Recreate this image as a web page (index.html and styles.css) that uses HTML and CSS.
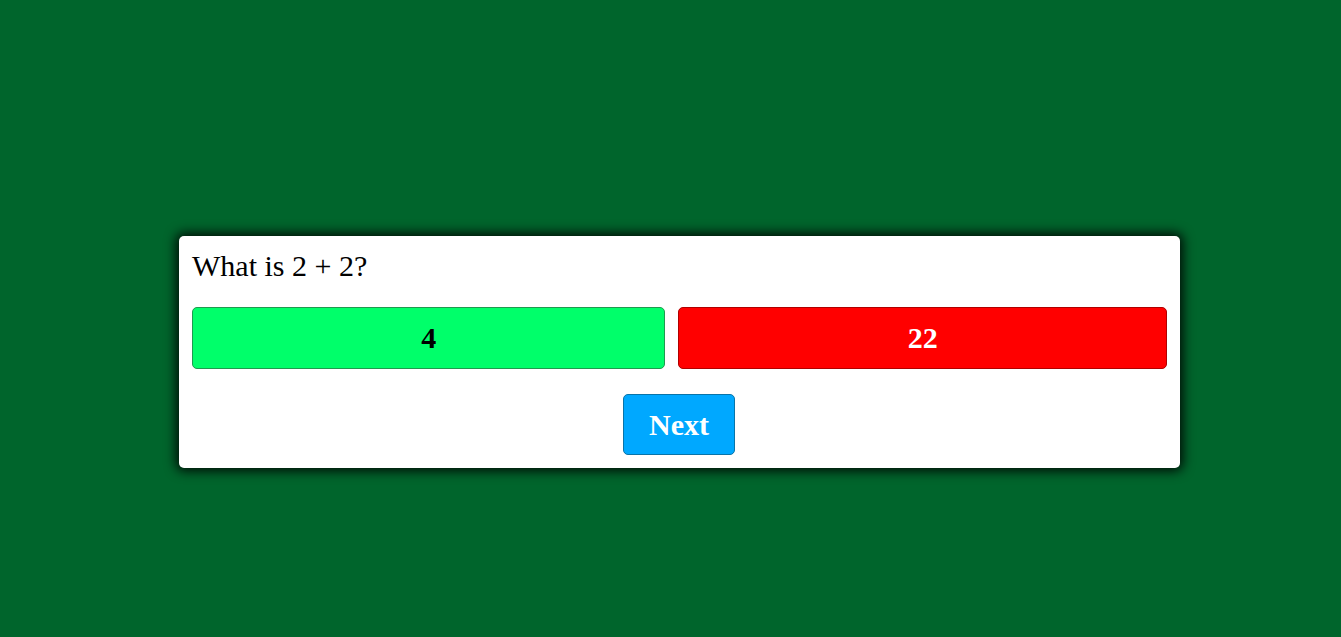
FILE: index.html
```html
<!DOCTYPE html>
<html>
<head>
<meta charset="utf-8">
<link rel="stylesheet" href="styles.css">
</head>
<body>
<main class="page">
  <section class="card">
    <div class="question">What is 2 + 2?</div>
    <div class="answers">
      <button class="answer correct">4</button>
      <button class="answer wrong">22</button>
    </div>
    <div class="controls">
      <button class="next">Next</button>
    </div>
  </section>
</main>
</body>
</html>
```
FILE: styles.css
```css
html, body {
  margin: 0;
  padding: 0;
}
body {
  background: #00652c;
  font-family: "Liberation Serif", "Times New Roman", serif;
  min-height: 637px;
}
.page {
  padding-top: 236px;
  padding-left: 179px;
}
.card {
  box-sizing: border-box;
  width: 1001px;
  height: 232px;
  background: #fff;
  border-radius: 5px;
  padding: 13px;
  box-shadow: 0 0 12px 3px rgba(0, 0, 0, 0.9);
}
.question {
  font-size: 30px;
  color: #000;
  margin-bottom: 24px;
}
.answers {
  display: flex;
  gap: 13px;
}
.answer {
  flex: 1 1 auto;
  font-family: inherit;
  font-size: 30px;
  font-weight: bold;
  padding: 13px 10px;
  height: 62px;
  border-radius: 5px;
  border: 1px solid;
  cursor: pointer;
}
.correct {
  background: #00ff6a;
  border-color: #1f9a4f;
  color: #000;
  padding-right: 9px;
}
.wrong {
  background: #ff0000;
  border-color: #b00000;
  color: #fff;
  padding-left: 11px;
}
.controls {
  display: flex;
  justify-content: center;
  margin-top: 25px;
  padding-right: 1px;
}
.next {
  font-family: inherit;
  font-size: 30px;
  font-weight: bold;
  color: #fff;
  background: #00a8ff;
  border: 1px solid #0a74a8;
  border-radius: 5px;
  width: 112px;
  height: 61px;
  padding: 0;
  cursor: pointer;
}
```
